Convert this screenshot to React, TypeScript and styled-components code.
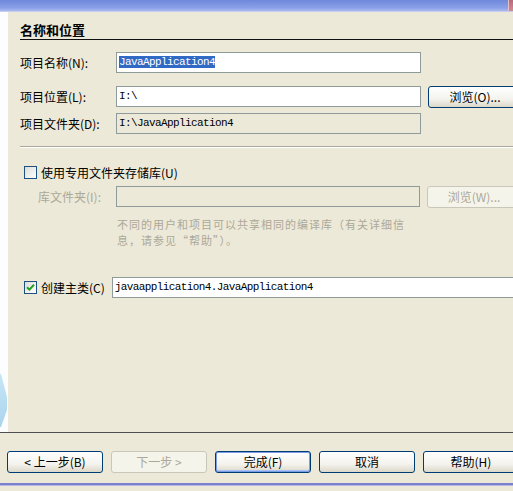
import styled, { createGlobalStyle, css } from 'styled-components';

const GlobalStyle = createGlobalStyle`
  html, body {
    margin: 0;
    padding: 0;
    background: #ece9d8;
  }
  * {
    box-sizing: border-box;
  }
`;

const App = () => {
  return (
    <Window>
      <GlobalStyle />
      <TitleStrip>
        <CloseEdge />
      </TitleStrip>
      <Body>
        <SideStrip>
          <svg width='8' height='420' viewBox='0 0 8 420'>
            <defs>
              <linearGradient id='sideBlob' x1='0' y1='0' x2='0' y2='1'>
                <stop offset='0' stopColor='#c7e6f5' />
                <stop offset='1' stopColor='#a9d4ee' />
              </linearGradient>
            </defs>
            <path d='M-10 360 L1 362 L7 385 L7 398 L1 415 L-10 418 Z' fill='url(#sideBlob)' />
          </svg>
        </SideStrip>
        <Content>
          <Heading>名称和位置</Heading>
          <FieldRow $top={12}>
            <Label>项目名称(N):</Label>
            <TextBox>
              <Selected>JavaApplication4</Selected>
            </TextBox>
          </FieldRow>
          <FieldRow $top={13}>
            <Label>项目位置(L):</Label>
            <TextBox>I:\</TextBox>
            <Button $width={94}>浏览(O)...</Button>
          </FieldRow>
          <FieldRow $top={5}>
            <Label>项目文件夹(D):</Label>
            <TextBox $disabled>I:\JavaApplication4</TextBox>
          </FieldRow>
          <Separator />
          <CheckRow $top={18}>
            <CheckBox />
            <CheckLabel>使用专用文件夹存储库(U)</CheckLabel>
          </CheckRow>
          <FieldRow $top={7}>
            <Label $indent={18} $disabled>
              库文件夹(I):
            </Label>
            <TextBox $disabled $width={304} />
            <Button $width={94} $disabled>
              浏览(W)...
            </Button>
          </FieldRow>
          <HelpText>
            <HelpLine>不同的用户和项目可以共享相同的编译库（有关详细信</HelpLine>
            <HelpLine>息，请参见“帮助”）。</HelpLine>
          </HelpText>
          <CheckRow $top={29} $tall>
            <CheckBox>
              <svg width='9' height='9' viewBox='0 0 9 9'>
                <path d='M1 4.2 L3.4 6.6 L8 1.8' stroke='#21a121' strokeWidth='2' fill='none' />
              </svg>
            </CheckBox>
            <CheckLabel>创建主类(C)</CheckLabel>
            <TextBox $width={410}>javaapplication4.JavaApplication4</TextBox>
          </CheckRow>
        </Content>
      </Body>
      <FooterRule />
      <ButtonBar>
        <Button>&lt; 上一步(B)</Button>
        <Button $disabled>下一步 &gt;</Button>
        <Button $primary>完成(F)</Button>
        <Button>取消</Button>
        <Button>帮助(H)</Button>
      </ButtonBar>
      <BottomEdge />
    </Window>
  );
};

const uiFont = `"Noto Sans CJK SC", "DejaVu Sans", sans-serif`;
const monoFont = `"Liberation Mono", "Noto Sans CJK SC", monospace`;

const Window = styled.div`
  width: 513px;
  height: 491px;
  overflow: hidden;
  display: flex;
  flex-direction: column;
  background: #ece9d8;
  font-family: ${uiFont};
  font-size: 12px;
  color: #000;
`;

const TitleStrip = styled.div`
  height: 12px;
  flex-shrink: 0;
  display: flex;
  justify-content: flex-end;
  background: linear-gradient(to bottom, #6f88da 0%, #8aa0e6 70%, #aab9ef 100%);
  border-bottom: 1px solid #c5cdec;
`;

const CloseEdge = styled.div`
  width: 5px;
  background: linear-gradient(to bottom, #b86a7c, #d28a96);
  border-left: 1px solid #e7c1c8;
`;

const Body = styled.div`
  height: 420px;
  flex-shrink: 0;
  display: flex;
`;

const SideStrip = styled.div`
  width: 8px;
  flex-shrink: 0;
  background: #fbfdff;
  svg {
    display: block;
  }
`;

const Content = styled.div`
  flex: 1;
  display: flex;
  flex-direction: column;
  padding: 9px 0 0 12px;
  min-width: 0;
`;

const Heading = styled.div`
  font-size: 13px;
  font-weight: bold;
  line-height: 18px;
  border-bottom: 1px solid #111;
`;

const FieldRow = styled.div<{ $top: number }>`
  display: flex;
  align-items: flex-start;
  gap: 7px;
  margin-top: ${(p) => p.$top}px;
  white-space: nowrap;
`;

const Label = styled.div<{ $indent?: number; $disabled?: boolean }>`
  width: ${(p) => 96 - (p.$indent ?? 0) - 6}px;
  flex-shrink: 0;
  margin-left: ${(p) => p.$indent ?? 0}px;
  margin-right: -1px;
  line-height: 21px;
  color: ${(p) => (p.$disabled ? '#aca899' : '#000')};
`;

const TextBox = styled.div<{ $disabled?: boolean; $width?: number }>`
  width: ${(p) => p.$width ?? 305}px;
  flex-shrink: 0;
  height: 21px;
  padding: 0 2px;
  border: 1px solid #8f9a9b;
  background: ${(p) => (p.$disabled ? '#ece9d8' : '#fff')};
  font-family: ${monoFont};
  font-size: 11px;
  letter-spacing: -0.6px;
  line-height: 19px;
  overflow: hidden;
`;

const Selected = styled.span`
  background: #316ac5;
  color: #fff;
`;

const Button = styled.button<{ $width?: number; $disabled?: boolean; $primary?: boolean }>`
  width: ${(p) => p.$width ?? 96}px;
  height: 22px;
  flex-shrink: 0;
  padding: 0;
  border: 1px solid #003c74;
  border-radius: 3px;
  background: linear-gradient(to bottom, #ffffff 0%, #f4f3ee 60%, #dcd8c9 100%);
  font-family: ${uiFont};
  font-size: 12px;
  color: #000;
  text-align: center;
  line-height: 20px;
  white-space: nowrap;
  ${(p) =>
    p.$disabled &&
    css`
      border-color: #c9c7ba;
      background: #f5f4ea;
      color: #aca899;
    `}
  ${(p) =>
    p.$primary &&
    css`
      box-shadow: inset 0 0 0 1px #7c9ee6, inset 0 -1px 0 1px #a8c1f3;
    `}
`;

const Separator = styled.div`
  height: 1px;
  margin-top: 12px;
  background: #aca899;
  box-shadow: 0 1px 0 #fff;
`;

const CheckRow = styled.div<{ $top: number; $tall?: boolean }>`
  display: flex;
  align-items: center;
  height: ${(p) => (p.$tall ? 21 : 14)}px;
  margin-top: ${(p) => p.$top}px;
  padding-left: 4px;
  white-space: nowrap;
`;

const CheckBox = styled.div`
  width: 13px;
  height: 13px;
  flex-shrink: 0;
  display: flex;
  align-items: center;
  justify-content: center;
  border: 1px solid #1c5180;
  background: linear-gradient(135deg, #dcdcd7, #ffffff);
`;

const CheckLabel = styled.div`
  margin-left: 4px;
  margin-right: 7px;
`;

const HelpText = styled.div`
  margin: 8px 0 0 97px;
  display: flex;
  flex-direction: column;
  color: #aca899;
  font-size: 11px;
  letter-spacing: 1px;
  white-space: nowrap;
`;

const HelpLine = styled.div`
  line-height: 16px;
`;

const FooterRule = styled.div`
  height: 1px;
  flex-shrink: 0;
  background: #4f4f4f;
`;

const ButtonBar = styled.div`
  display: flex;
  gap: 8px;
  padding: 18px 0 0 7px;
  height: 50px;
  flex-shrink: 0;
`;

const BottomEdge = styled.div`
  height: 3px;
  flex-shrink: 0;
  background: #7a82cf;
  border-bottom: 1px solid #b5b9e4;
`;

export default App;
